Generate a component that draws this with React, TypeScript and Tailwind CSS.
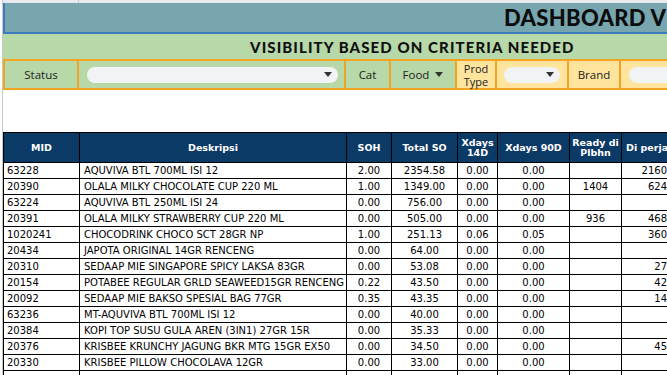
const rows: [string, string, string, string, string, string, string, string][] = [
  ["63228", "AQUVIVA BTL 700ML ISI 12", "2.00", "2354.58", "0.00", "0.00", "", "2160"],
  ["20390", "OLALA MILKY CHOCOLATE CUP 220 ML", "1.00", "1349.00", "0.00", "0.00", "1404", "624"],
  ["63224", "AQUVIVA BTL 250ML ISI 24", "0.00", "756.00", "0.00", "0.00", "", ""],
  ["20391", "OLALA MILKY STRAWBERRY CUP 220 ML", "0.00", "505.00", "0.00", "0.00", "936", "468"],
  ["1020241", "CHOCODRINK CHOCO SCT 28GR NP", "1.00", "251.13", "0.06", "0.05", "", "360"],
  ["20434", "JAPOTA ORIGINAL 14GR RENCENG", "0.00", "64.00", "0.00", "0.00", "", ""],
  ["20310", "SEDAAP MIE SINGAPORE SPICY LAKSA 83GR", "0.00", "53.08", "0.00", "0.00", "", "27"],
  ["20154", "POTABEE REGULAR GRLD SEAWEED15GR RENCENG", "0.22", "43.50", "0.00", "0.00", "", "42"],
  ["20092", "SEDAAP MIE BAKSO SPESIAL BAG 77GR", "0.35", "43.35", "0.00", "0.00", "", "14"],
  ["63236", "MT-AQUVIVA BTL 700ML ISI 12", "0.00", "40.00", "0.00", "0.00", "", ""],
  ["20384", "KOPI TOP SUSU GULA AREN (3IN1) 27GR 15R", "0.00", "35.33", "0.00", "0.00", "", ""],
  ["20376", "KRISBEE KRUNCHY JAGUNG BKR MTG 15GR EX50", "0.00", "34.50", "0.00", "0.00", "", "45"],
  ["20330", "KRISBEE PILLOW CHOCOLAVA 12GR", "0.00", "33.00", "0.00", "0.00", "", ""],
  ["", "", "", "", "", "", "", ""],
];

const Caret = () => (
  <svg width="8" height="5" viewBox="0 0 8 5" className="shrink-0">
    <path d="M0 0h8L4 5z" fill="#333" />
  </svg>
);

const Pill = ({ className }: { className: string }) => (
  <div className={`flex h-[16px] items-center justify-end rounded-full bg-[#f1f3f4] pr-[6px] ${className}`}>
    <Caret />
  </div>
);

export default function App() {
  return (
    <div className="h-[375px] w-[667px] overflow-hidden bg-white" style={{ fontFamily: "'DejaVu Sans', sans-serif" }}>
      <div className="w-[700px] border-l border-[#c8c8c8] ml-[2px]">
        {/* spreadsheet strip above */}
        <div className="h-[3px] bg-[#e8eaef] flex">
          <div className="w-[76px] border-r border-[#c9ccd3]" />
        </div>

        {/* title band */}
        <div className="h-[31px] bg-[#77a6af] border-l-2 border-b-2 border-[#3d7cbc] flex items-center pl-[499px] overflow-hidden">
          <span className="whitespace-nowrap text-[22px] font-black tracking-[0.3px] text-[#0c0c0c]" style={{ fontFamily: "Lato, sans-serif" }}>
            DASHBOARD VISIBILITY
          </span>
        </div>

        {/* subtitle band */}
        <div className="h-[25px] bg-[#b7d8a9] flex items-center pt-[2px] pl-[247px]">
          <span className="whitespace-nowrap text-[15px] font-black tracking-[1.1px] text-[#111]" style={{ fontFamily: "Lato, sans-serif" }}>
            VISIBILITY BASED ON CRITERIA NEEDED
          </span>
        </div>

        {/* filter row */}
        <div className="flex h-[31px] border-y-2 border-[#f1a321] text-[11.5px] text-[#222]" style={{ fontFamily: "'Open Sans', sans-serif" }}>
          <div className="w-[76px] shrink-0 bg-[#b7d8a9] border-x-2 border-[#f1a321] flex items-center justify-center">Status</div>
          <div className="w-[267px] shrink-0 bg-[#b7d8a9] border-r-2 border-[#f1a321] flex items-center pl-[8px] pr-[6px]">
            <Pill className="w-full" />
          </div>
          <div className="w-[45px] shrink-0 bg-[#b7d8a9] border-r-2 border-[#f1a321] flex items-center justify-center">Cat</div>
          <div className="w-[66px] shrink-0 bg-[#b7d8a9] border-r-2 border-[#f1a321] flex items-center justify-center gap-[6px]">
            Food <Caret />
          </div>
          <div className="w-[40px] shrink-0 bg-[#fee49d] border-r-2 border-[#f1a321] flex flex-col items-center justify-center text-center text-[11px] leading-[13px]">
            <span>Prod</span>
            <span>Type</span>
          </div>
          <div className="w-[72px] shrink-0 bg-[#fee49d] border-r-2 border-[#f1a321] flex items-center pl-[7px] pr-[7px]">
            <Pill className="w-full" />
          </div>
          <div className="w-[52px] shrink-0 bg-[#fee49d] border-r-2 border-[#f1a321] flex items-center justify-center">Brand</div>
          <div className="flex-1 min-w-0 bg-[#fee49d] flex items-center pl-[8px]">
            <Pill className="w-[200px] shrink-0" />
          </div>
        </div>

        <div className="h-[42px]" />

        {/* table */}
        <table className="table-fixed border-collapse w-[666px]">
          <colgroup>
            <col className="w-[76px]" />
            <col className="w-[267px]" />
            <col className="w-[45px]" />
            <col className="w-[66px]" />
            <col className="w-[40px]" />
            <col className="w-[72px]" />
            <col className="w-[52px]" />
            <col className="w-[48px]" />
          </colgroup>
          <thead>
            <tr className="h-[30px] bg-[#0c3a67] text-white text-[9.5px] font-bold leading-[10px]">
              {["MID", "Deskripsi", "SOH", "Total SO", "Xdays 14D", "Xdays 90D", "Ready di Plbhn", "Di perjalanan"].map((h, i) => (
                <th
                  key={h}
                  className={`border border-black px-[1px] ${i === 7 ? "text-left pl-[4px] whitespace-nowrap overflow-hidden" : "text-center"}`}
                >
                  {h}
                </th>
              ))}
            </tr>
          </thead>
          <tbody className="text-[10px] text-black">
            {rows.map((r, i) => (
              <tr key={i} className="h-[16px]">
                <td className="border border-black pl-[3px] leading-[14px]">{r[0]}</td>
                <td className="border border-black pl-[4px] whitespace-nowrap overflow-hidden leading-[14px]">{r[1]}</td>
                <td className="border border-black text-center leading-[14px]">{r[2]}</td>
                <td className="border border-black text-center leading-[14px]">{r[3]}</td>
                <td className="border border-black text-center leading-[14px]">{r[4]}</td>
                <td className="border border-black text-center leading-[14px]">{r[5]}</td>
                <td className="border border-black text-center leading-[14px]">{r[6]}</td>
                <td className="border border-black text-right pr-[2px] leading-[14px]">{r[7]}</td>
              </tr>
            ))}
          </tbody>
        </table>
      </div>
    </div>
  );
}
